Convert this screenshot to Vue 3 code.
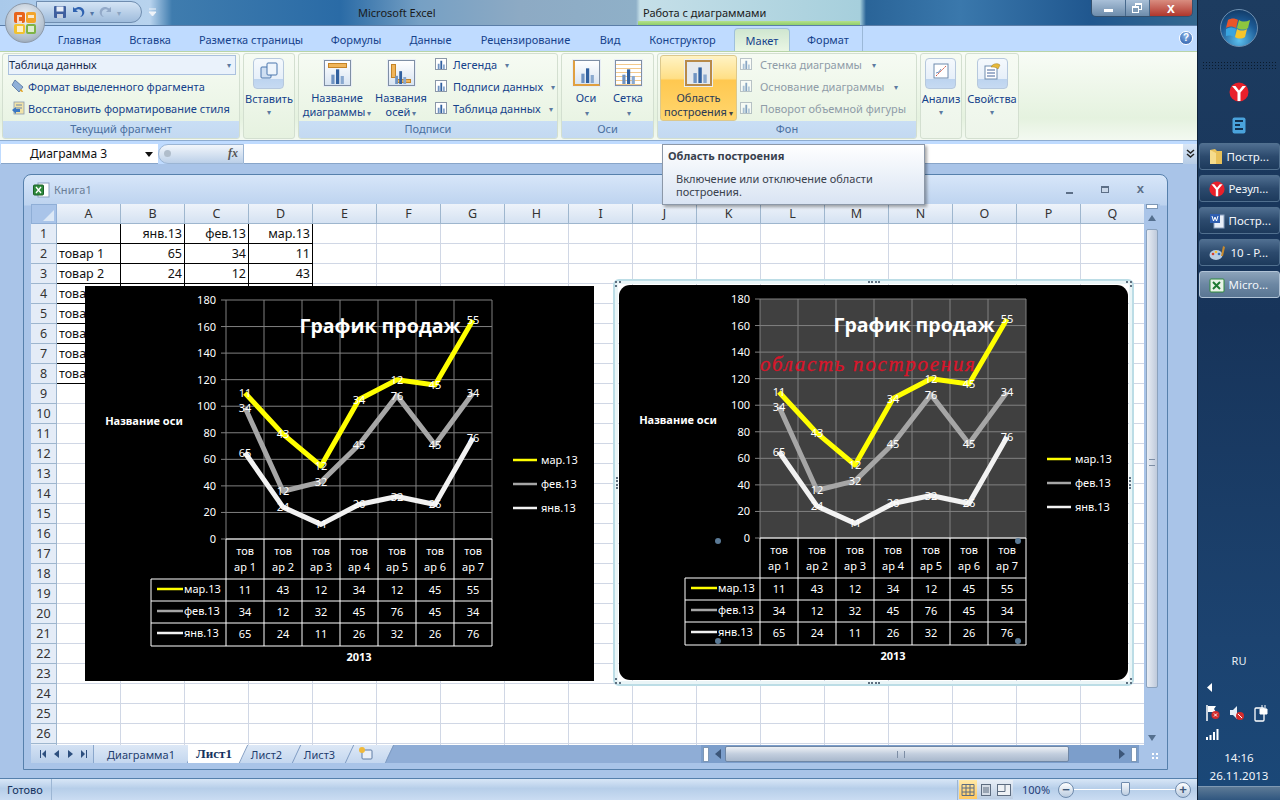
<template>
  <div class="app">
    <svg width="0" height="0" class="defs">
      <defs>
        <symbol id="bars" viewBox="0 0 12 12">
          <rect x="1" y="5" width="2.4" height="7" fill="#6f93c2" />
          <rect x="4.5" y="1" width="2.4" height="11" fill="#31609f" />
          <rect x="8" y="6" width="2.4" height="6" fill="#89a8cf" />
        </symbol>
      </defs>
    </svg>

    <div class="excel">
      <div class="titlebar">
        <div class="office-btn">
          <svg width="24" height="24" viewBox="0 0 24 24">
            <rect x="1" y="1" width="11" height="11" rx="2" fill="#e8641b" />
            <rect x="13" y="1" width="10" height="11" rx="2" fill="#f3a42b" />
            <rect x="1" y="13" width="11" height="10" rx="2" fill="#f2c230" />
            <rect x="13" y="13" width="10" height="10" rx="2" fill="#7eb446" />
            <path d="M4 4h5v2H6v4h3v2H4zM15 4h6v3h-6zM4 15h6v6H4zM15 15h6v6h-6z" fill="#fff" opacity=".75" />
          </svg>
        </div>
        <div class="qat">
          <svg width="14" height="14" viewBox="0 0 14 14"><rect x="1" y="1" width="12" height="12" rx="1" fill="#3f5f9f" /><rect x="3.5" y="1.5" width="7" height="5" fill="#e8eef8" /><rect x="4" y="9" width="6" height="4" fill="#c5cfdf" /></svg>
          <svg width="15" height="14" viewBox="0 0 15 14"><path d="M2 2v5h5L5 5c2-1.500 5-1 6 2 .6 1.800-.2 3.800-2 5 3.500-.6 5-3.600 4-6.500C12 2 7.500.5 3.800 3.500z" fill="#2f62b0" /></svg>
          <span class="qat-arrow">▾</span>
          <svg width="15" height="14" viewBox="0 0 15 14"><path d="M13 2v5H8l2-2C8 3.500 5 4 4 7c-.6 1.800.2 3.800 2 5-3.500-.6-5-3.600-4-6.500C3 2 7.500.5 11.200 3.500z" fill="#92a9c8" /></svg>
          <span class="qat-arrow dim">▾</span>
        </div>
        <svg class="qat-more" width="9" height="9" viewBox="0 0 9 9"><path d="M1 1h7M1 4l3.500 4L8 4z" fill="#eef3f9" stroke="#eef3f9" /></svg>
        <span class="app-title">Microsoft Excel</span>
        <span class="context-title">Работа с диаграммами</span>
        <div class="win-btns">
          <span class="wb wb-min"><i></i></span>
          <span class="wb wb-max"><b></b><b class="back"></b></span>
          <span class="wb wb-close">x</span>
        </div>
      </div>

      <div class="tabs">
        <span v-for="t in tabs" :key="t.name" class="tab" :class="{ active: t.active }" :style="{ width: t.w + 'px' }">{{ t.name }}</span>
        <span class="context-edge"></span>
        <span class="help">?</span>
      </div>

      <div class="ribbon">
        <section class="group" style="width: 238px">
          <div class="body fragment">
            <div class="combo">Таблица данных<span class="tiny">▾</span></div>
            <div class="line-btn">
              <svg width="14" height="14" viewBox="0 0 14 14"><path d="M4 1l8 7-4 5-7-7z" fill="#8fb0d8" stroke="#50709c" stroke-width=".8" /><path d="M10 10c1 1 2 2 2 3-2 0-3-1-3-2z" fill="#e0a020" /></svg>
              Формат выделенного фрагмента
            </div>
            <div class="line-btn">
              <svg width="14" height="14" viewBox="0 0 14 14"><rect x="3" y="1" width="10" height="12" fill="#f1e3a8" stroke="#8c9bb0" stroke-width=".8" /><path d="M5 4h6M5 7h6" stroke="#6d87aa" /><path d="M1 9l4-3v2h4v3H5v2z" fill="#3b78c4" /></svg>
              Восстановить форматирование стиля
            </div>
          </div>
          <div class="group-label">Текущий фрагмент</div>
        </section>

        <section class="group" style="width: 52px">
          <div class="body big-only">
            <div class="drop-btn">
              <div class="drop-ico">
                <svg width="20" height="20" viewBox="0 0 20 20"><rect x="2" y="6" width="10" height="11" rx="1" fill="#cfdff2" stroke="#4a76ad" /><rect x="8" y="2" width="10" height="12" rx="1" fill="#eef5fc" stroke="#4a76ad" /></svg>
              </div>
              <span class="lbl">Вставить</span>
              <span class="tiny">▾</span>
            </div>
          </div>
        </section>

        <section class="group" style="width: 260px">
          <div class="body row">
            <div class="big-btn" style="width: 76px">
              <div class="box">
                <i class="mark top"></i>
                <svg class="b" width="16" height="16"><use href="#bars" /></svg>
              </div>
              <span class="lbl">Название<br />диаграммы<em>▾</em></span>
            </div>
            <div class="big-btn" style="width: 52px">
              <div class="box">
                <i class="mark left"></i><i class="mark bottom"></i>
                <svg class="b" width="14" height="14"><use href="#bars" /></svg>
              </div>
              <span class="lbl">Названия<br />осей<em>▾</em></span>
            </div>
            <div class="small-col labels">
              <div v-for="s in labelBtns" :key="s" class="small-btn">
                <span class="sbox"><svg width="9" height="9"><use href="#bars" /></svg></span>{{ s }}<em>▾</em>
              </div>
            </div>
          </div>
          <div class="group-label">Подписи</div>
        </section>

        <section class="group" style="width: 93px">
          <div class="body row">
            <div class="big-btn" style="width: 48px">
              <div class="box axes">
                <svg class="b" width="16" height="16"><use href="#bars" /></svg>
              </div>
              <span class="lbl">Оси<br /><em>▾</em></span>
            </div>
            <div class="big-btn" style="width: 36px">
              <div class="box grids">
                <svg class="b" width="16" height="16"><use href="#bars" /></svg>
              </div>
              <span class="lbl">Сетка<br /><em>▾</em></span>
            </div>
          </div>
          <div class="group-label">Оси</div>
        </section>

        <section class="group" style="width: 260px">
          <div class="body row">
            <div class="big-btn selected">
              <div class="box plotbox">
                <svg class="b" width="17" height="17"><use href="#bars" /></svg>
              </div>
              <span class="lbl">Область<br />построения<em>▾</em></span>
            </div>
            <div class="small-col disabled">
              <div v-for="s in bgBtns" :key="s.t" class="small-btn">
                <span class="sbox"><svg width="9" height="9"><use href="#bars" /></svg></span>{{ s.t }}<em v-if="s.arrow">▾</em>
              </div>
            </div>
          </div>
          <div class="group-label">Фон</div>
        </section>

        <section class="group plain" style="width: 42px">
          <div class="body big-only">
            <div class="drop-btn">
              <div class="drop-ico">
                <svg width="20" height="20" viewBox="0 0 20 20"><rect x="3" y="3" width="14" height="14" fill="#fff" stroke="#6f8bad" /><path d="M5 15L15 5" stroke="#d0503a" stroke-dasharray="2 1" /><path d="M5 12l3-1 2-3" stroke="#6f93c2" fill="none" /></svg>
              </div>
              <span class="lbl">Анализ</span>
              <span class="tiny">▾</span>
            </div>
          </div>
        </section>

        <section class="group plain" style="width: 54px">
          <div class="body big-only">
            <div class="drop-btn">
              <div class="drop-ico">
                <svg width="20" height="20" viewBox="0 0 20 20"><rect x="3" y="5" width="12" height="13" fill="#fff" stroke="#6f8bad" /><path d="M5 9h8M5 12h8M5 15h8" stroke="#44659a" /><path d="M9 6c2-4 7-4 9-2l-2 4c-2-2-4-2-7-2z" fill="#e7b93a" stroke="#9c7a1e" stroke-width=".5" /></svg>
              </div>
              <span class="lbl">Свойства</span>
              <span class="tiny">▾</span>
            </div>
          </div>
        </section>
      </div>

      <div class="formula">
        <div class="namebox">Диаграмма 3<span class="nb-arrow"></span></div>
        <div class="fx-btn"><i></i><span>fx</span></div>
        <div class="input"></div>
        <div class="expand">
          <svg width="9" height="10" viewBox="0 0 9 10"><path d="M1 1l3.500 3L8 1M1 5l3.500 3L8 5" fill="none" stroke="#222" stroke-width="1.500" /></svg>
        </div>
      </div>

      <div class="mdi">
        <div class="win">
          <div class="win-title">
            <svg width="17" height="16" viewBox="0 0 17 16"><rect x="5" y="1" width="11" height="14" fill="#fff" stroke="#8aa0bf" /><rect x="0.500" y="3" width="10" height="10" rx="1" fill="#2f8a3c" stroke="#1c6128" /><path d="M3 5l5 6M8 5l-5 6" stroke="#fff" stroke-width="1.300" /></svg>
            <span>Книга1</span>
            <div class="mini-btns"><i class="m1"></i><i class="m2"></i><span>x</span></div>
          </div>
          <div class="sheet-row">
            <div class="sheet">
              <div class="grid">
                <div class="corner"><i></i></div>
                <div v-for="c in cols" :key="c" class="col-head">{{ c }}</div>
                <template v-for="r in 27" :key="r">
                  <div class="row-head">{{ r < 27 ? r : '' }}</div>
                  <div
                    v-for="(c, ci) in cols"
                    :key="c"
                    class="cell"
                    :class="{ framed: r <= 8 && ci < 4, num: ci > 0 }"
                  >{{ cellText(r, ci) }}</div>
                </template>
              </div>

              <div v-for="ch in charts" :key="ch.id" class="chart" :class="ch.id">
                <div v-if="ch.id === 'second'" class="sel">
                  <i class="grip g-t"></i>
                  <i class="grip g-b"></i>
                  <i class="grip g-l"></i>
                  <i class="grip g-r"></i>
                  <i class="cnr c-tl"></i>
                  <i class="cnr c-tr"></i>
                  <i class="cnr c-bl"></i>
                  <i class="cnr c-br"></i>
                </div>
                <svg width="509" height="395" viewBox="0 0 509 395">
                  <rect width="509" height="395" :rx="ch.id === 'second' ? 11 : 0" fill="#000" />
                  <rect v-if="ch.id === 'second'" x="141" y="14" width="266" height="239" fill="#404040" />
                  <line v-for="v in ticks" :key="'h' + v" x1="136" x2="407" :y1="yOf(v)" :y2="yOf(v)" class="gl" />
                  <line v-for="i in 8" :key="'v' + i" :x1="gridX(i - 1)" :x2="gridX(i - 1)" y1="14" y2="253" class="gl" />
                  <text v-for="v in ticks" :key="'t' + v" x="131" :y="yOf(v) + 4" text-anchor="end" class="tx">{{ v }}</text>

                  <text x="295" y="47" text-anchor="middle" class="chart-title">График продаж</text>

                  <polyline v-for="s in series" :key="s.name" :points="linePoints(s)" fill="none" :stroke="s.color" stroke-width="5" stroke-linejoin="round" />
                  <template v-for="s in series" :key="'l' + s.name">
                    <text v-for="(v, i) in s.values" :key="i" :x="catX(i)" :y="yOf(s.cum[i]) + 4" text-anchor="middle" class="tx">{{ v }}</text>
                  </template>
                  <text v-if="ch.id === 'second'" x="141" y="86" class="script">область построения</text>

                  <text x="59" y="139" text-anchor="middle" class="tx bold">Название оси</text>

                  <g v-for="(s, i) in series" :key="'k' + s.name">
                    <line x1="428" x2="452" :y1="174 + i * 24" :y2="174 + i * 24" :stroke="s.color" stroke-width="2.500" />
                    <text x="456" :y="178 + i * 24" class="tx">{{ s.name }}</text>
                  </g>

                  <line v-for="i in 8" :key="'c' + i" :x1="gridX(i - 1)" :x2="gridX(i - 1)" y1="253" y2="360" class="tl" />
                  <line x1="141" x2="407" y1="253" y2="253" class="tl" />
                  <line v-for="y in [293, 315, 337, 360]" :key="'r' + y" x1="66" x2="407" :y1="y" :y2="y" class="tl" />
                  <line x1="66" x2="66" y1="293" y2="360" class="tl" />
                  <g v-for="i in 7" :key="'n' + i">
                    <text :x="catX(i - 1)" y="269" text-anchor="middle" class="tx">тов</text>
                    <text :x="catX(i - 1)" y="285" text-anchor="middle" class="tx">ар {{ i }}</text>
                  </g>
                  <g v-for="(s, i) in series" :key="'d' + s.name">
                    <line x1="72" x2="98" :y1="303 + i * 22" :y2="303 + i * 22" :stroke="s.color" stroke-width="2.500" />
                    <text x="99" :y="307 + i * 22" class="tx">{{ s.name }}</text>
                    <text v-for="(v, j) in s.values" :key="j" :x="catX(j)" :y="308 + i * 22" text-anchor="middle" class="tx">{{ v }}</text>
                  </g>
                  <text x="274" y="375" text-anchor="middle" class="tx bold">2013</text>

                  <template v-if="ch.id === 'second'">
                    <circle v-for="p in dots" :key="p[0] + '-' + p[1]" :cx="p[0]" :cy="p[1]" r="3" fill="#5b7a96" />
                  </template>
                </svg>
              </div>
            </div>
            <div class="vscroll">
              <span class="sb-split"></span>
              <span class="sb-up"></span>
              <div class="vthumb"><i></i></div>
              <span class="sb-down"></span>
            </div>
          </div>
          <div class="tabbar">
            <div class="nav">
              <svg width="6" height="8" viewBox="0 0 6 8"><path d="M0 0h1v8H0zM6 0v8L2 4z" fill="#2d4f7e" /></svg>
              <svg width="5" height="8" viewBox="0 0 5 8"><path d="M5 0v8L0 4z" fill="#2d4f7e" /></svg>
              <svg width="5" height="8" viewBox="0 0 5 8"><path d="M0 0v8l5-4z" fill="#2d4f7e" /></svg>
              <svg width="6" height="8" viewBox="0 0 6 8"><path d="M6 0H5v8h1zM0 0v8l4-4z" fill="#2d4f7e" /></svg>
            </div>
            <span class="stab first">Диаграмма1</span>
            <span class="stab on">Лист1</span>
            <span class="stab">Лист2</span>
            <span class="stab">Лист3</span>
            <span class="stab add">
              <svg width="16" height="14" viewBox="0 0 16 14"><rect x="4" y="3" width="10" height="9" rx="1" fill="#e9eff8" stroke="#5f7da6" /><circle cx="4" cy="3" r="3" fill="#f0b93a" /></svg>
            </span>
            <div class="tab-fill"></div>
            <div class="hscroll">
              <span class="split"></span>
              <span class="h-arrow left"></span>
              <div class="hthumb"><i></i></div>
              <span class="h-arrow right"></span>
              <span class="split"></span>
              <span class="resize"></span>
            </div>
          </div>
        </div>

        <div class="tooltip">
          <strong>Область построения</strong>
          <p>Включение или отключение области<br />построения.</p>
        </div>
      </div>

      <div class="status">
        <span class="ready">Готово</span>
        <div class="status-fill"></div>
        <div class="views">
          <span class="view on">
            <svg width="14" height="12" viewBox="0 0 14 12"><path d="M1 .5h12v11H1zM1 4h12M1 8h12M5 .5v11M9 .5v11" fill="none" stroke="#5d6c80" /></svg>
          </span>
          <span class="view">
            <svg width="10" height="12" viewBox="0 0 10 12"><rect x=".5" y=".5" width="9" height="11" fill="#d5dce6" stroke="#5d6c80" /><path d="M2 4h6M2 6h6M2 8h6" stroke="#5d6c80" /></svg>
          </span>
          <span class="view">
            <svg width="14" height="12" viewBox="0 0 14 12"><rect x=".5" y=".5" width="13" height="11" fill="#eef1f5" stroke="#5d6c80" /><path d="M8 .5v7H.5" fill="none" stroke="#5d6c80" /></svg>
          </span>
        </div>
        <span class="zoom-val">100%</span>
        <div class="zoom">
          <span class="round">−</span>
          <div class="track"><i></i></div>
          <span class="round">+</span>
        </div>
      </div>
    </div>

    <aside class="taskbar">
      <div class="orb">
        <svg width="26" height="24" viewBox="0 0 26 24">
          <path d="M2 4c3-2 7-2 10 0l-2 8c-3-2-7-2-10 0z" fill="#e9562a" />
          <path d="M13 4c3 2 7 2 11 0l-2 8c-3 2-7 2-11 0z" fill="#8dc63f" />
          <path d="M0 13c3-2 6-2 10 0l-2 8c-3-2-7-2-10 0z" fill="#39a5e0" />
          <path d="M11 13c3 2 7 2 10 0l-2 8c-3 2-7 2-10 0z" fill="#f7c52b" />
        </svg>
      </div>
      <div class="dots"></div>
      <div class="yandex"><svg width="20" height="20" viewBox="0 0 20 20"><circle cx="10" cy="10" r="9.500" fill="#e8202a" /><path d="M3 4l5.500 6.500V19h3v-8.500L17 4h-3.500L10 8.500 6.500 4z" fill="#fff" /></svg></div>
      <div class="listicon">
        <svg width="14" height="17" viewBox="0 0 14 17"><rect x=".5" y=".5" width="13" height="16" rx="2" fill="#4aa3dc" /><path d="M3 4h8M3 8h5M3 12h8" stroke="#12304f" stroke-width="1.800" /></svg>
      </div>
      <div class="tasks">
        <div v-for="t in tasks" :key="t.icon" class="task" :class="{ lit: t.lit }">
          <svg v-if="t.icon === 'folder'" width="14" height="17" viewBox="0 0 14 17"><path d="M1 2l5-1 2 2h5v13H1z" fill="#e8c15a" /><path d="M1 2l6 3v11H1z" fill="#f5dc8c" /></svg>
          <svg v-else-if="t.icon === 'ya'" width="16" height="16" viewBox="0 0 20 20"><circle cx="10" cy="10" r="9.500" fill="#e8202a" /><path d="M3 4l5.500 6.500V19h3v-8.500L17 4h-3.500L10 8.500 6.500 4z" fill="#fff" /></svg>
          <svg v-else-if="t.icon === 'word'" width="16" height="16" viewBox="0 0 16 16"><rect x="5" y="2" width="10" height="13" fill="#e8eef8" stroke="#8aa0bf" /><rect x="1" y="1" width="10" height="9" fill="#2f5eb0" /><path d="M3 3l1.500 5L6 4l1.500 4L9 3" fill="none" stroke="#fff" /></svg>
          <svg v-else-if="t.icon === 'paint'" width="18" height="16" viewBox="0 0 18 16"><ellipse cx="7" cy="10" rx="6.500" ry="5" fill="#b9cde2" /><circle cx="4" cy="9" r="1.300" fill="#d8402c" /><circle cx="7" cy="7" r="1.300" fill="#f0c030" /><circle cx="10" cy="9" r="1.300" fill="#2f6fc0" /><path d="M14 1l2 1-2 9h-2z" fill="#c78a2e" /></svg>
          <svg v-else width="16" height="16" viewBox="0 0 16 16"><rect x="1" y="2" width="14" height="13" rx="1" fill="#e9f3e8" stroke="#2f8a3c" /><path d="M4 5l7 7M11 5l-7 7" stroke="#1f7a33" stroke-width="2" /></svg>
          <span>{{ t.label }}</span>
        </div>
      </div>
      <div class="tb-spacer"></div>
      <div class="lang">RU</div>
      <div class="tray-arrow">
        <svg width="5" height="9" viewBox="0 0 5 9"><path d="M5 0v9L0 4.500z" fill="#fff" /></svg>
      </div>
      <div class="tray">
        <svg width="14" height="18" viewBox="0 0 14 18"><path d="M1 1v16" stroke="#fff" stroke-width="1.500" /><path d="M2 2h8l-2 3 2 3H2z" fill="#fff" /><circle cx="9.500" cy="11" r="4" fill="#d42c2c" /><path d="M8 9.500l3 3M11 9.500l-3 3" stroke="#fff" /></svg>
        <svg width="16" height="18" viewBox="0 0 16 18"><path d="M1 6h3l4-4v13l-4-4H1z" fill="#e6eef7" /><circle cx="11" cy="12" r="4" fill="#d42c2c" /><path d="M9 10l4 4" stroke="#fff" /></svg>
        <svg width="14" height="18" viewBox="0 0 14 18"><rect x="1" y="4" width="9" height="13" rx="1" fill="none" stroke="#fff" stroke-width="1.300" /><path d="M6 5h7v5H6zM8 1v4M11 1v4" fill="#fff" stroke="#fff" /></svg>
      </div>
      <div class="signal">
        <svg width="16" height="13" viewBox="0 0 16 13"><path d="M0 10h2v3H0zM3.500 8h2v5h-2zM7 5h2v8H7zM10.500 2h2v11h-2z" fill="#fff" /></svg>
      </div>
      <div class="clock">14:16</div>
      <div class="clock date">26.11.2013</div>
      <div class="show-desktop"></div>
    </aside>
  </div>
</template>

<script setup>
const tabs = [
  { name: 'Главная', w: 71 },
  { name: 'Вставка', w: 70 },
  { name: 'Разметка страницы', w: 132 },
  { name: 'Формулы', w: 78 },
  { name: 'Данные', w: 71 },
  { name: 'Рецензирование', w: 119 },
  { name: 'Вид', w: 50 },
  { name: 'Конструктор', w: 95 },
  { name: 'Макет', w: 56, active: true },
  { name: 'Формат', w: 76 },
]
const labelBtns = ['Легенда', 'Подписи данных', 'Таблица данных']
const bgBtns = [
  { t: 'Стенка диаграммы', arrow: true },
  { t: 'Основание диаграммы', arrow: true },
  { t: 'Поворот объемной фигуры', arrow: false },
]
const cols = 'ABCDEFGHIJKLMNOPQ'.split('')
const ticks = [0, 20, 40, 60, 80, 100, 120, 140, 160, 180]
const charts = [{ id: 'first' }, { id: 'second' }]
const dots = [[99, 256], [399, 256], [99, 356], [399, 356]]

const jan = [65, 24, 11, 26, 32, 26, 76]
const feb = [34, 12, 32, 45, 76, 45, 34]
const mar = [11, 43, 12, 34, 12, 45, 55]
const febCum = feb.map((v, i) => v + jan[i])
const marCum = mar.map((v, i) => v + febCum[i])
const series = [
  { name: 'мар.13', color: '#ffff00', values: mar, cum: marCum },
  { name: 'фев.13', color: '#a6a6a6', values: feb, cum: febCum },
  { name: 'янв.13', color: '#f2f2f2', values: jan, cum: jan },
]

const tasks = [
  { label: 'Постр...', icon: 'folder' },
  { label: 'Резул...', icon: 'ya' },
  { label: 'Постр...', icon: 'word' },
  { label: '10 - Р...', icon: 'paint' },
  { label: 'Micro...', icon: 'excel', lit: true },
]

function yOf(v) {
  return 253 - (v * 239) / 180
}
function gridX(i) {
  return 141 + i * 38
}
function catX(i) {
  return 160 + i * 38
}
function linePoints(s) {
  return s.cum.map((v, i) => `${catX(i)},${yOf(v)}`).join(' ')
}
function cellText(r, ci) {
  if (r === 1) return ['', 'янв.13', 'фев.13', 'мар.13'][ci] || ''
  if (r > 8 || ci > 3) return ''
  if (ci === 0) return `товар ${r - 1}`
  return [jan, feb, mar][ci - 1][r - 2]
}
</script>

<style>
html, body { margin: 0; overflow: hidden; }
</style>

<style scoped>
.app { display: flex; width: 1280px; height: 800px; overflow: hidden; font-family: "Noto Sans", sans-serif; font-size: 11px; color: #15428b; }
.defs { position: absolute; }
.excel { width: 1197px; height: 800px; display: flex; flex-direction: column; background: #bfdbff; position: relative; }

/* title bar */
.titlebar { height: 25px; position: relative; background: linear-gradient(90deg, #a9c9ea 0, #b8d3ee 150px, #3f7cae 172px, #2a6ba6 340px, #76a0c4 420px, #8daac4 520px, #8fb0c8 636px, #c5dfe8 640px, #a6cfdc 860px, #2a6498 866px, #3a78ac 960px, #20578f 1090px, #34688f 1197px); border-bottom: 1px solid #5b7ea8; }
.office-btn { position: absolute; left: 5px; top: 3px; width: 40px; height: 40px; border-radius: 50%; z-index: 3; display: flex; align-items: center; justify-content: center; background: radial-gradient(circle at 50% 35%, #f4f7fb, #aebccb 70%, #7f8c9a); border: 1px solid #8d99a8; box-sizing: border-box; }
.qat { position: absolute; left: 36px; top: 1px; width: 106px; height: 22px; box-sizing: border-box; padding-left: 16px; display: flex; align-items: center; gap: 4px; border: 1px solid #6f8db0; border-radius: 0 11px 11px 0; background: linear-gradient(#d4e4f5, #9fbcdc); }
.qat-arrow { font-size: 8px; color: #5476a5; }
.qat-arrow.dim { color: #8ba4c2; }
.qat-more { position: absolute; left: 148px; top: 8px; }
.app-title { position: absolute; left: 358px; top: 5px; color: #1a1a1a; }
.context-title { position: absolute; left: 643px; top: 5px; color: #1a1a1a; }
.context-title::after { content: ""; position: absolute; left: -5px; top: 16px; width: 222px; height: 4px; background: linear-gradient(#b6e08c, #8fcf6a); }
.win-btns { position: absolute; left: 1091px; top: 0; width: 102px; height: 17px; display: flex; border: 1px solid #33506e; border-top: 0; border-radius: 0 0 5px 5px; overflow: hidden; box-sizing: border-box; }
.wb { display: flex; align-items: center; justify-content: center; background: linear-gradient(#a9c0d8, #6d8cab); position: relative; }
.wb-min { width: 33px; border-right: 1px solid #47698c; }
.wb-min i { width: 9px; height: 3px; background: #fff; margin-top: 5px; }
.wb-max { width: 23px; border-right: 1px solid #47698c; }
.wb-max b { position: absolute; left: 6px; top: 6px; width: 7px; height: 7px; box-sizing: border-box; border: 1px solid #fff; border-top-width: 2px; background: #7f9cb8; z-index: 1; }
.wb-max b.back { left: 9px; top: 3px; z-index: 0; }
.wb-close { flex: 1; background: linear-gradient(#d98d80, #b0362c); color: #fff; font: bold 14px "Liberation Sans", sans-serif; }

/* ribbon tabs */
.tabs { height: 25px; display: flex; align-items: flex-end; padding-left: 44px; position: relative; background: #bfdbff; }
.tab { height: 23px; display: flex; align-items: center; justify-content: center; color: #15428b; box-sizing: border-box; flex-shrink: 0; }
.tab.active { background: linear-gradient(#cfe6d0, #eaf6e4); border: 1px solid #9fc0dc; border-bottom: 0; border-radius: 4px 4px 0 0; margin-left: 4px; }
.context-edge { position: absolute; left: 862px; top: 0; width: 1px; height: 25px; background: #9bb8d8; }
.help { position: absolute; left: 1179px; top: 5px; width: 14px; height: 14px; border-radius: 50%; background: radial-gradient(circle at 50% 30%, #8cb6e8, #2457a6); color: #fff; font: bold 10px/12px "Liberation Sans", sans-serif; text-align: center; border: 1px solid #fff; box-sizing: border-box; }
.ribbon { height: 90px; box-sizing: border-box; padding: 1px 2px 2px 2px; display: flex; gap: 3px; background: linear-gradient(#f8fcf6, #e5f2df 75%, #f3f9f1); border-top: 1px solid #b8d4a8; border-bottom: 1px solid #8eacd0; }
.group { display: flex; flex-direction: column; height: 86px; border: 1px solid #d3dfd0; border-radius: 3px; box-sizing: border-box; background: linear-gradient(#f6fbf3, #e6f2e0); overflow: hidden; flex-shrink: 0; }
.group.plain { background: linear-gradient(#f6fbf3, #edf5ea); }
.body { flex: 1; min-height: 0; }
.body.row { display: flex; align-items: flex-start; }
.group-label { height: 17px; line-height: 16px; text-align: center; color: #4a6fa0; background: linear-gradient(#c9def5, #c3d9f1); }
.fragment { padding: 1px 3px 0 5px; }
.combo { height: 20px; border: 1px solid #abc1de; background: #eaf2fb; color: #15294b; line-height: 18px; box-sizing: border-box; display: flex; justify-content: space-between; padding: 0 4px 0 0; }
.tiny { font-size: 8px; color: #5c7aa0; }
.line-btn { height: 22px; display: flex; align-items: center; gap: 3px; color: #15428b; white-space: nowrap; padding-left: 3px; }
.big-only { display: flex; justify-content: center; }
.drop-btn { display: flex; flex-direction: column; align-items: center; padding-top: 4px; white-space: nowrap; }
.drop-ico { width: 31px; height: 31px; box-sizing: border-box; border: 1px solid #b6c8dd; border-radius: 4px; background: linear-gradient(#f5f9fd 0, #e6eff9 70%, #bdd4ef 70%, #c6daf2); display: flex; justify-content: center; padding-top: 2px; }
.drop-btn .lbl { margin-top: 2px; }
.big-btn { display: flex; flex-direction: column; align-items: center; padding-top: 6px; color: #15428b; flex-shrink: 0; text-align: center; }
.big-btn .lbl { margin-top: 5px; line-height: 14px; white-space: nowrap; }
em { font-style: normal; font-size: 8px; color: #5c7aa0; margin-left: 2px; }
.box { width: 27px; height: 26px; box-sizing: border-box; border: 1px solid #7f8fa5; background: linear-gradient(#fff, #d8e4f2); position: relative; box-shadow: 0 0 0 1px #e8eef5; }
.box .b { position: absolute; left: 5px; bottom: 1px; }
.mark { position: absolute; background: #f0b55a; border: 1px solid #c48428; box-sizing: border-box; }
.mark.top { left: 3px; right: 3px; top: 2px; height: 5px; }
.mark.left { left: 2px; top: 3px; width: 5px; height: 14px; }
.mark.bottom { left: 8px; right: 3px; bottom: 2px; height: 4px; }
.axes { border-left: 2px solid #e0a040; border-bottom: 2px solid #e0a040; }
.grids { background: repeating-linear-gradient(0deg, #f3c98c 0 1px, #fff 1px 4px), linear-gradient(#fff, #fff); }
.plotbox { background: #e5e9ee; border: 2px solid #b88a4a; }
.small-col { display: flex; flex-direction: column; margin-top: -1px; flex-shrink: 0; }
.small-col.labels { margin-left: 8px; }
.small-btn { height: 22px; display: flex; align-items: center; gap: 6px; white-space: nowrap; color: #15428b; }
.sbox { width: 12px; height: 12px; box-sizing: border-box; border: 1px solid #8a97a8; background: #fff; display: flex; align-items: flex-end; justify-content: center; }
.disabled .small-btn { color: #8f9ca8; gap: 8px; }
.disabled .sbox { opacity: .55; }
.big-btn.selected { width: 77px; margin: 1px 3px 0 2px; padding-top: 4px; height: 66px; box-sizing: border-box; border: 1px solid #dcc88c; border-radius: 3px; color: #2b3a55; background: linear-gradient(#fff3c4 0, #ffdf86 35%, #ffc850 38%, #ffd66e 100%); }
.selected em { color: #444; }

/* formula bar */
.formula { height: 23px; box-sizing: border-box; padding-top: 3px; display: flex; background: #bfdbff; }
.formula > div { height: 20px; box-sizing: border-box; }
.namebox { width: 157px; background: #fff; border-bottom: 1px solid #88a5c9; color: #111; font-size: 12px; line-height: 19px; padding-left: 29px; position: relative; margin-left: 1px; }
.nb-arrow { position: absolute; left: 144px; top: 8px; border-style: solid; border-width: 5px 4px 0 4px; border-color: #111 transparent transparent transparent; }
.fx-btn { width: 86px; background: linear-gradient(#f2f6fb, #bcd0e8); border-radius: 10px 0 0 10px; border: 1px solid #9bb5d4; position: relative; }
.fx-btn i { position: absolute; left: 5px; top: 5px; width: 7px; height: 7px; border-radius: 50%; background: #b0bdcb; }
.fx-btn span { position: absolute; right: 5px; top: 1px; font: italic bold 12px "Liberation Serif", serif; color: #555; }
.input { flex: 1; background: #fff; border-bottom: 1px solid #88a5c9; }
.expand { width: 14px; background: linear-gradient(#dbe7f6, #b6cce6); display: flex; align-items: center; justify-content: center; }

/* workbook window */
.mdi { flex: 1; min-height: 0; position: relative; padding: 10px 29px 8px 23px; background: #a9c4e8; }
.win { height: 100%; box-sizing: border-box; display: flex; flex-direction: column; border: 1px solid #5680ac; border-radius: 8px 8px 0 0; background: linear-gradient(#d7e6f9, #bdd3ef 30px, #a9c4e8 31px); padding: 0 6px 6px 7px; }
.win-title { height: 29px; flex-shrink: 0; display: flex; align-items: center; gap: 4px; color: #6a7d96; position: relative; margin-left: 2px; }
.mini-btns { position: absolute; right: 17px; top: 6px; display: flex; gap: 28px; align-items: center; color: #5c6f87; font: bold 13px "Liberation Sans", sans-serif; }
.mini-btns i.m1 { width: 7px; height: 2px; background: #5c6f87; margin-top: 9px; }
.mini-btns i.m2 { width: 8px; height: 7px; background: #cad8ea; border: 1px solid #5c6f87; border-top-width: 2px; box-sizing: border-box; margin-top: 2px; }
.sheet-row { flex: 1; min-height: 0; display: flex; }
.sheet { width: 1113px; position: relative; overflow: hidden; background: #fff; }
.grid { display: grid; grid-template-columns: 26px repeat(17, 64px); grid-auto-rows: 20px; grid-template-rows: 20px; color: #111; font-size: 12.500px; }
.corner { background: #a9c4e9; border: 1px solid #8faed6; box-sizing: border-box; position: relative; }
.corner i { position: absolute; right: 2px; bottom: 2px; border-style: solid; border-width: 0 0 11px 11px; border-color: transparent transparent #dce8f6 transparent; }
.col-head { background: linear-gradient(#eef3fa, #d5e2f2); border-right: 1px solid #9eb6ce; border-bottom: 1px solid #9eb6ce; box-sizing: border-box; text-align: center; line-height: 19px; color: #333; }
.row-head { background: #e4ecf7; border-right: 1px solid #9eb6ce; border-bottom: 1px solid #9eb6ce; box-sizing: border-box; text-align: center; line-height: 19px; color: #333; }
.cell { border-right: 1px solid #d0d7e5; border-bottom: 1px solid #d0d7e5; box-sizing: border-box; line-height: 19px; padding: 0 2px; white-space: nowrap; overflow: hidden; }
.cell.num { text-align: right; }
.cell.framed { border-color: #000; }

/* charts sit freely on top of the sheet */
.chart { position: absolute; width: 509px; height: 395px; }
.chart svg { display: block; position: relative; }
.chart.first { left: 54px; top: 82px; }
.chart.second { left: 588px; top: 81px; }
.sel { position: absolute; inset: -6px; border: 2px solid #bcdde6; border-radius: 6px; box-shadow: inset 0 0 0 3px #eaf5f7; }
.grip { position: absolute; }
.g-t, .g-b { left: 50%; margin-left: -6px; width: 12px; border-top: 2px dotted #5f7080; }
.g-t { top: 0; }
.g-b { bottom: 0; }
.g-l, .g-r { top: 50%; margin-top: -6px; height: 12px; border-left: 2px dotted #5f7080; }
.g-l { left: 1px; }
.g-r { right: 1px; }
.cnr { position: absolute; width: 6px; height: 6px; box-sizing: border-box; border: 2px dotted #5f7080; }
.c-tl { left: 0; top: 0; border-right: 0; border-bottom: 0; }
.c-tr { right: 0; top: 0; border-left: 0; border-bottom: 0; }
.c-bl { left: 0; bottom: 0; border-right: 0; border-top: 0; }
.c-br { right: 0; bottom: 0; border-left: 0; border-top: 0; }
.gl { stroke: #808080; stroke-width: 1; }
.tl { stroke: #fff; stroke-width: 1; }
.tx { fill: #fff; font: 11px "Noto Sans", sans-serif; }
.tx.bold { font-weight: 700; }
.chart-title { fill: #fff; font: 700 19.500px "Open Sans", sans-serif; }
.script { fill: #d8152a; stroke: #d8152a; stroke-width: .35; font: italic 21px "Liberation Serif", serif; letter-spacing: 1.700px; }

.vscroll { width: 16px; background: #a9c4e8; position: relative; }
.sb-split { position: absolute; left: 2px; top: 0; width: 12px; height: 5px; background: #fff; border: 1px solid #7d97b5; box-sizing: border-box; }
.sb-up, .sb-down { position: absolute; left: 4px; border-style: solid; border-color: transparent; }
.sb-up { top: 11px; border-width: 0 4px 6px 4px; border-bottom-color: #55708f; }
.sb-down { bottom: 4px; border-width: 6px 4px 0 4px; border-top-color: #55708f; }
.vthumb { position: absolute; left: 2px; top: 25px; width: 12px; height: 459px; box-sizing: border-box; border: 1px solid #8aa2be; border-radius: 2px; background: linear-gradient(90deg, #e8edf4, #bfcadb); }
.vthumb i { position: absolute; left: 2px; right: 2px; top: 50%; height: 5px; border-top: 1px solid #7d8ea5; border-bottom: 1px solid #7d8ea5; }

.tabbar { height: 18px; flex-shrink: 0; display: flex; align-items: stretch; background: #8fadd6; position: relative; }
.nav { width: 63px; display: flex; justify-content: space-around; align-items: center; padding: 0 2px 0 5px; box-sizing: border-box; background: linear-gradient(#d3e1f3, #b9cfea); border-right: 1px solid #8aa7cc; flex-shrink: 0; }
.stab { display: flex; align-items: center; justify-content: center; width: 53px; color: #1f3d6e; background: linear-gradient(#dde8f6, #c4d7ef); font-size: 11px; position: relative; flex-shrink: 0; }
.stab::after { content: ""; position: absolute; right: -4px; top: 0; bottom: 0; width: 9px; background: inherit; border-right: 1px solid #7f9bc2; transform: skewX(-25deg); z-index: 1; }
.stab svg { position: relative; z-index: 2; }
.stab.first { width: 94px; }
.stab.on { background: #fff; font-weight: 700; color: #15325e; width: 52px; font-family: "Liberation Serif", serif; font-size: 13px; z-index: 2; }
.stab.add { width: 40px; }
.tab-fill { flex: 1; }
.hscroll { width: 460px; display: flex; align-items: center; background: #7c9ecb; height: 100%; flex-shrink: 0; }
.split { width: 6px; height: 15px; background: #fff; border: 1px solid #7d97b5; box-sizing: border-box; margin: 0 2px; flex-shrink: 0; }
.h-arrow { width: 0; border-style: solid; border-color: transparent; flex-shrink: 0; }
.h-arrow.left { border-width: 5px 6px 5px 0; border-right-color: #3c5679; margin: 0 4px; }
.h-arrow.right { border-width: 5px 0 5px 6px; border-left-color: #3c5679; margin: 0 4px 0 50px; }
.hthumb { width: 344px; height: 16px; border: 1px solid #6f87a6; box-sizing: border-box; border-radius: 2px; background: linear-gradient(#eef1f5, #c2cede 50%, #a9b8cc); position: relative; flex-shrink: 0; }
.hthumb i { position: absolute; left: 50%; top: 4px; width: 6px; height: 7px; border-left: 1px solid #7d8ea5; border-right: 1px solid #7d8ea5; }
.resize { flex: 1; height: 100%; background: #a9c4e8; position: relative; }
.resize::after { content: ""; position: absolute; right: 1px; bottom: 2px; width: 9px; height: 9px; background: radial-gradient(#fff 1px, transparent 1px) 0 0 / 4px 4px; }

.tooltip { position: absolute; left: 662px; top: -20px; width: 263px; height: 61px; box-sizing: border-box; padding: 4px 12px 0 5px; color: #39414d; background: linear-gradient(#fff, #d9e4f3); border: 1px solid #8c98a8; box-shadow: 2px 2px 3px rgba(0, 0, 0, .35); z-index: 5; }
.tooltip strong { font-weight: 700; display: block; line-height: 14px; }
.tooltip p { margin: 9px 0 0 8px; line-height: 13px; }

/* status bar */
.status { height: 22px; flex-shrink: 0; box-sizing: border-box; display: flex; align-items: center; border-top: 1px solid #5680ac; background: linear-gradient(#d8e6f7, #b6cee9 45%, #cadcf2); color: #15325e; padding-right: 6px; }
.ready { width: 52px; padding-left: 7px; box-sizing: border-box; border-right: 1px solid #9cb6d4; line-height: 21px; }
.status-fill { flex: 1; }
.views { display: flex; border-left: 1px solid #9cb6d4; padding-left: 1px; height: 20px; align-items: center; }
.view { width: 18px; height: 19px; display: flex; align-items: center; justify-content: center; background: linear-gradient(#e8eef6, #bccde2); }
.view.on { background: linear-gradient(#ffe9a8, #ffc860); }
.zoom-val { margin-left: 9px; width: 36px; color: #1f3d78; }
.zoom { display: flex; align-items: center; width: 133px; }
.round { width: 16px; height: 16px; border-radius: 50%; border: 1px solid #6f8bad; box-sizing: border-box; background: linear-gradient(#fff, #b9cbe0); color: #3e5878; font: bold 13px/13px "Liberation Sans", sans-serif; text-align: center; flex-shrink: 0; }
.track { flex: 1; height: 1px; background: #fff; position: relative; }
.track i { position: absolute; left: 47px; top: -7px; width: 9px; height: 14px; box-sizing: border-box; background: linear-gradient(#f4f7fb, #bfcfe2); border: 1px solid #6f8bad; border-radius: 1px 1px 4px 4px; }

/* taskbar */
.taskbar { width: 83px; height: 800px; flex-shrink: 0; display: flex; flex-direction: column; align-items: center; color: #fff; background: linear-gradient(#1d3c60, #17345a 40%, #1c4370 80%, #1a4878); border-left: 1px solid #0e2138; box-sizing: border-box; }
.orb { width: 38px; height: 38px; margin-top: 9px; border-radius: 50%; display: flex; align-items: center; justify-content: center; background: radial-gradient(circle at 50% 85%, #5cc0ee, #1c5a95 55%, #0e2f55); border: 1px solid #6d8fb0; box-sizing: border-box; flex-shrink: 0; }
.dots { width: 74px; height: 8px; margin-top: 14px; background-image: radial-gradient(#0a1a2c 1px, transparent 1px); background-size: 3px 3px; flex-shrink: 0; }
.yandex { margin-top: 13px; height: 20px; flex-shrink: 0; }
.listicon { margin-top: 15px; height: 17px; flex-shrink: 0; }
.tasks { margin-top: 9px; display: flex; flex-direction: column; gap: 5px; width: 81px; }
.task { height: 27px; box-sizing: border-box; display: flex; align-items: center; gap: 4px; padding-left: 9px; border: 1px solid #51708f; border-radius: 3px; background: linear-gradient(#4f6e90, #2c4a6d 50%, #1d3a5c); color: #f2f6fa; font-size: 11.500px; white-space: nowrap; }
.task.lit { background: linear-gradient(#8ca3ba, #6c87a3 50%, #5a7693); border-color: #b0c3d6; }
.tb-spacer { flex: 1; }
.lang { color: #e8eff6; margin-bottom: 12px; }
.tray-arrow { width: 100%; padding-left: 9px; box-sizing: border-box; height: 12px; margin-bottom: 12px; }
.tray { display: flex; gap: 9px; width: 100%; padding-left: 8px; box-sizing: border-box; margin-bottom: 5px; }
.signal { width: 100%; padding-left: 8px; box-sizing: border-box; height: 15px; margin-bottom: 7px; }
.clock { font-size: 11.500px; color: #f2f6fa; line-height: 18px; }
.date { margin-bottom: 1px; }
.show-desktop { width: 100%; height: 14px; background: linear-gradient(#5d7a96, #2f567f); border-top: 1px solid #7f99b3; box-sizing: border-box; }
</style>
